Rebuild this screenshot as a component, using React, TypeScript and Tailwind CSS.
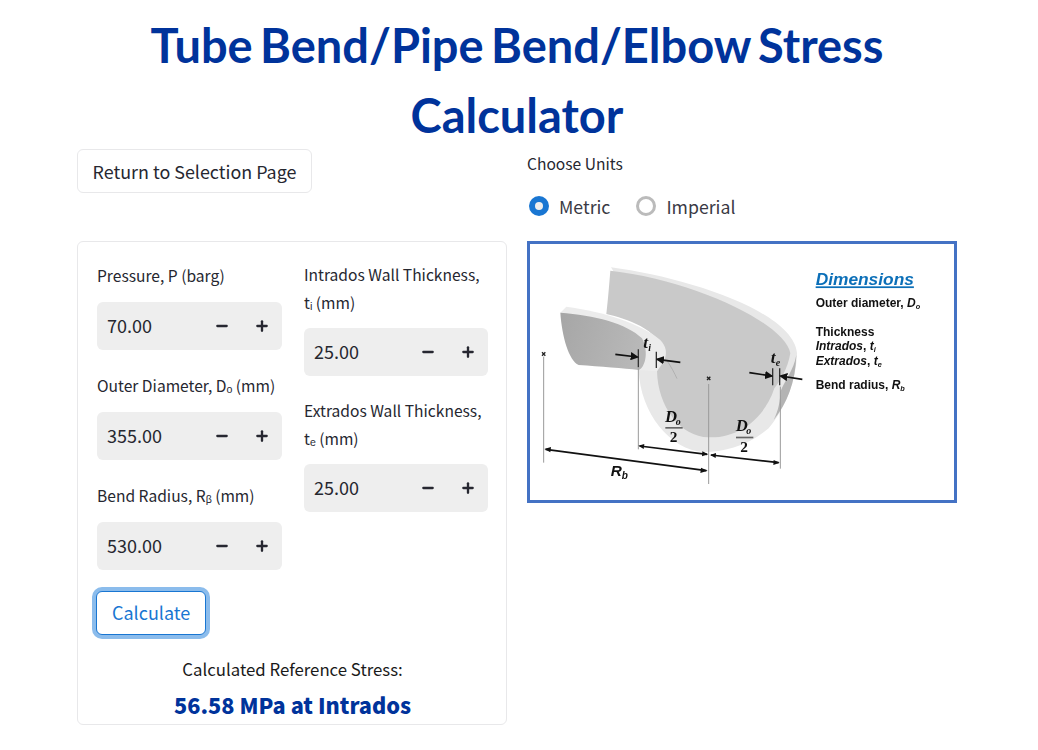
import { Minus, Plus } from "lucide-react"

const sans = "font-['Noto_Sans_CJK_SC','Source_Sans_Pro',sans-serif]"

function NumberField({ value }: { value: string }) {
  return (
    <div className="flex h-12 items-center rounded-[6px] bg-[#eeeeee] pl-[10px] text-[18px] text-[#262730]">
      <span className="flex-1 pb-[2px]">{value}</span>
      <span className="flex w-10 justify-center">
        <Minus size={16} strokeWidth={3.5} />
      </span>
      <span className="flex w-10 justify-center">
        <Plus size={16} strokeWidth={3.5} />
      </span>
    </div>
  )
}

function Field({ label, value, tight }: { label: string; value: string; tight?: boolean }) {
  return (
    <div>
      <label className={`${tight ? "mb-[11px]" : "mb-[12px]"} block -translate-y-px text-[15.6px] leading-[28px] text-[#262730]`}>{label}</label>
      <NumberField value={value} />
    </div>
  )
}

function Arrow({ x1, y1, x2, y2 }: { x1: number; y1: number; x2: number; y2: number }) {
  return <line x1={x1} y1={y1} x2={x2} y2={y2} stroke="#111" strokeWidth="5" markerEnd="url(#head)" />
}

function Diagram() {
  return (
    <svg viewBox="9 12 1272 768" className="block h-full w-full blur-[0.3px]">
      <defs>
        <marker id="head" markerWidth="5" markerHeight="5" refX="4" refY="2.5" orient="auto">
          <path d="M0 0L5 2.5L0 5z" fill="#111" />
        </marker>
        <linearGradient id="inner" x1="0" x2="1" y1="0" y2="0.2">
          <stop offset="0" stopColor="#a6a6a6" />
          <stop offset="1" stopColor="#b8b8b8" />
        </linearGradient>
      </defs>

      {/* bend body */}
      <path d="M252 82C480 112 800 215 810 340C808 420 775 505 725 565C660 620 590 636 530 636C430 630 340 520 335 390L400 330Z" fill="#e8e8e8" />
      <path d="M250 92C246 140 242 190 238 222C300 235 390 270 415 330L390 392C392 500 460 590 545 592C640 595 715 530 742 445C762 420 782 385 790 340C775 250 500 120 250 92Z" fill="#c9c9c9" />
      <path d="M760 455C775 420 800 390 808 345C805 430 780 490 740 540C755 510 760 480 760 455Z" fill="#b4b4b4" />

      {/* cut end */}
      <path d="M100 218L118 200C230 215 340 250 400 300C418 320 422 340 410 365L390 394L335 390Z" fill="#ececec" />
      <path d="M100 218C105 290 125 360 155 375C220 380 290 385 335 390C352 385 368 340 345 295C300 250 200 225 100 218Z" fill="url(#inner)" />
      <path d="M420 362C432 380 442 398 450 416" stroke="#999" strokeWidth="1.5" fill="none" />

      {/* dimension lines */}
      <g stroke="#9a9a9a" strokeWidth="3" fill="none">
        <line x1="50" y1="350" x2="50" y2="668" />
        <line x1="334" y1="385" x2="334" y2="628" />
        <line x1="545" y1="432" x2="545" y2="732" />
        <line x1="760" y1="440" x2="760" y2="686" />
      </g>
      <g stroke="#222" strokeWidth="4">
        <path d="M45 337L55 347M55 337L45 347M540 410L550 420M550 410L540 420" />
      </g>
      <g stroke="#333" strokeWidth="4">
        <line x1="334" y1="328" x2="334" y2="382" />
        <line x1="388" y1="335" x2="388" y2="384" />
        <line x1="737" y1="385" x2="737" y2="436" />
        <line x1="758" y1="385" x2="758" y2="436" />
      </g>

      {/* arrows */}
      <Arrow x1={265} y1={343} x2={331} y2={351} />
      <Arrow x1={460} y1={367} x2={391} y2={358} />
      <Arrow x1={667} y1={398} x2={734} y2={408} />
      <Arrow x1={826} y1={418} x2={761} y2={408} />
      <line x1="338" y1="618" x2="540" y2="643" stroke="#111" strokeWidth="5" />
      <path d="M334 617L352 612L350 627ZM544 643L526 634L525 649Z" fill="#111" />
      <line x1="552" y1="645" x2="755" y2="668" stroke="#111" strokeWidth="5" />
      <path d="M549 645L567 639L566 654ZM758 668L740 660L739 675Z" fill="#111" />
      <line x1="56" y1="628" x2="538" y2="692" stroke="#111" strokeWidth="5" />
      <path d="M52 627L72 621L70 637ZM542 692L522 683L520 699Z" fill="#111" />

      {/* labels on drawing */}
      <g fontFamily="'Liberation Serif',serif" fontWeight="700" fontStyle="italic" fill="#111">
        <text x="349" y="324" fontSize="52">t</text>
        <text x="364" y="334" fontSize="30">i</text>
        <text x="731" y="368" fontSize="52">t</text>
        <text x="746" y="378" fontSize="30">e</text>
        <text x="414" y="546" fontSize="50">D</text>
        <text x="446" y="554" fontSize="30">o</text>
        <text x="626" y="574" fontSize="50">D</text>
        <text x="658" y="582" fontSize="30">o</text>
      </g>
      <g fontFamily="'Liberation Serif',serif" fontWeight="700" fill="#111" fontSize="46">
        <text x="428" y="607">2</text>
        <text x="640" y="636">2</text>
      </g>
      <rect x="415" y="561" width="52" height="5" fill="#666" />
      <rect x="627" y="590" width="52" height="5" fill="#666" />
      <g fontFamily="'Liberation Sans',sans-serif" fontWeight="700" fontStyle="italic" fill="#111">
        <text x="251" y="709" fontSize="46">R</text>
        <text x="284" y="717" fontSize="30">b</text>
      </g>

      {/* legend */}
      <g fontFamily="'Liberation Sans',sans-serif" fontWeight="700" fill="#111" fontSize="36">
        <text x="866" y="136" fontSize="52" fontStyle="italic" fill="#0b6fb8" textDecoration="underline">Dimensions</text>
        <text x="866" y="201">
          Outer diameter, <tspan fontStyle="italic">D</tspan>
          <tspan fontStyle="italic" fontSize="22" dy="6">o</tspan>
        </text>
        <text x="866" y="287">Thickness</text>
        <text x="866" y="331">
          <tspan fontStyle="italic">Intrados</tspan>, <tspan fontStyle="italic">t</tspan>
          <tspan fontStyle="italic" fontSize="22" dy="6">i</tspan>
        </text>
        <text x="866" y="375">
          <tspan fontStyle="italic">Extrados</tspan>, <tspan fontStyle="italic">t</tspan>
          <tspan fontStyle="italic" fontSize="22" dy="6">e</tspan>
        </text>
        <text x="866" y="446">
          Bend radius, <tspan fontStyle="italic">R</tspan>
          <tspan fontStyle="italic" fontSize="22" dy="6">b</tspan>
        </text>
      </g>
    </svg>
  )
}

export default function App() {
  return (
    <div className={`${sans} ml-[77px] h-[750px] w-[880px] overflow-hidden bg-white text-[#262730]`}>
      <h1 className="pt-[10px] text-center font-['Lato',sans-serif] text-[47px] leading-[70px] font-bold text-[#00339b] [word-spacing:-4px]">
        Tube Bend/Pipe Bend/Elbow Stress Calculator
      </h1>

      <div className="mt-[-1px] grid grid-cols-2 gap-5">
        <div>
          <button className="mb-12 block h-[44px] w-[235px] rounded-[6px] border border-[#e8e8ea] bg-white text-[17.9px]">
            Return to Selection Page
          </button>

          {/* Inputs card */}
          <div className="rounded-[6px] border border-[#e8e8ea] pt-[19px] pr-[18px] pl-[19px]">
            <div className="grid grid-cols-[185px_184px] gap-[22px]">
              <div className="mt-px flex flex-col gap-[22px]">
                <Field label="Pressure, P (barg)" value="70.00" />
                <Field label="Outer Diameter, Dₒ (mm)" value="355.00" />
                <Field label="Bend Radius, Rᵦ (mm)" value="530.00" />
              </div>
              <div className="flex flex-col gap-[21px]">
                <Field tight label="Intrados Wall Thickness, tᵢ (mm)" value="25.00" />
                <Field tight label="Extrados Wall Thickness, tₑ (mm)" value="25.00" />
              </div>
            </div>
            <button className="mt-[21px] ml-[-1px] block h-[44px] rounded-[6px] border border-[#1976d2] bg-white px-[15px] pb-px text-[18px] text-[#1976d2] ring-4 ring-[#8bbcec]">
              Calculate
            </button>
            <p className="mt-[20px] text-center text-[16.8px] leading-[28px] text-[#1a1a1a]">Calculated Reference Stress:</p>
            <p className="mt-[6px] pb-[3px] text-center text-[21.7px] leading-[32px] font-extrabold text-[#00339b]">56.58 MPa at Intrados</p>
          </div>
        </div>

        <div>
          <p className="text-[15.6px] leading-[28px]">Choose Units</p>
          <div className="mt-[15px] flex h-7 items-center text-[17.7px] text-[#3a3a44]">
            <span className="ml-[2px] flex h-5 w-5 items-center justify-center rounded-full bg-[#1976d2]">
              <span className="h-2 w-2 rounded-full bg-[#eeeeee]" />
            </span>
            <span className="ml-[10px]">Metric</span>
            <span className="ml-[26px] h-5 w-5 rounded-full border-[3px] border-[#bbbbbb]" />
            <span className="ml-[10px]">Imperial</span>
          </div>
          <div className="mt-[21px] h-[262px] w-[430px] border-[3px] border-[#4472c4] bg-white">
            <Diagram />
          </div>
        </div>
      </div>
    </div>
  )
}
